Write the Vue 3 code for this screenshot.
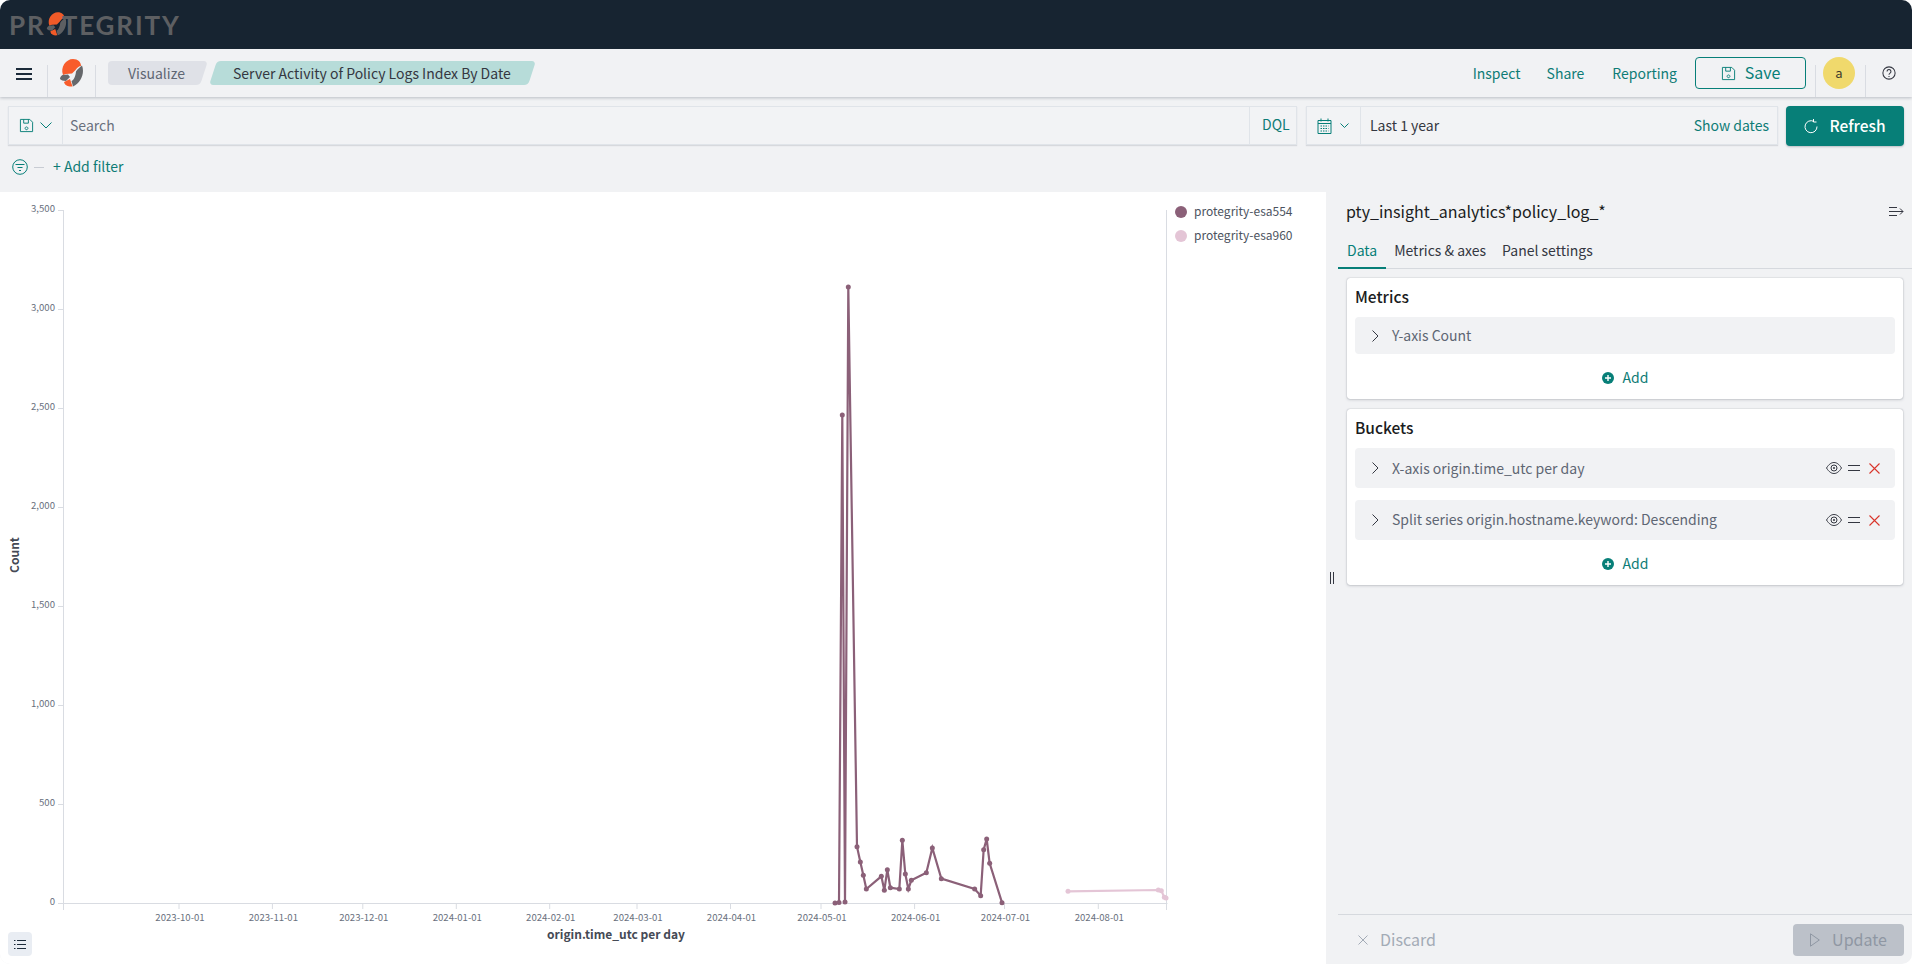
<script setup>
const H = 902, perUnit = 99 / 500
const yTicks = [0, 500, 1000, 1500, 2000, 2500, 3000, 3500].map(v => ({
  y: H - v * perUnit,
  label: v.toLocaleString('en-US')
}))
const xTicks = [
  [179, '2023-10-01'], [272.4, '2023-11-01'], [362.8, '2023-12-01'], [456.3, '2024-01-01'],
  [549.7, '2024-02-01'], [637, '2024-03-01'], [730.5, '2024-04-01'], [821, '2024-05-01'],
  [914.6, '2024-06-01'], [1004.5, '2024-07-01'], [1098.3, '2024-08-01']
].map(([x, label]) => ({ x, label }))
const zoomPts = [[231,197],[241,243],[250,283],[259,324],[304,286],[313,328],[322,266],[331,320],[358,324],[367,178],[376,279],[385,324],[394,298],[439,275],[457,201],[484,293],[584,324],[602,344],[611,206],[620,174],[629,247],[666,365]]
  .map(([x, y]) => [780 + x / 3, 780 + y / 3])
const s1 = [[835, 902], [839, 901.5], [842.3, 414], [845, 901], [848.3, 286], ...zoomPts]
const s2 = [[864,331],[1135,327],[1144,329],[1153,349],[1158,351]].map(([x, y]) => [780 + x / 3, 780 + y / 3])
const toPts = a => a.map(p => p.join(',')).join(' ')
const line1 = toPts(s1)
const line2 = toPts(s2)
</script>

<template>
  <div class="app">
    <header class="brand">
      <div class="wordmark">
        <span>PR</span>
        <svg class="wm-o" viewBox="0 0 25 28" width="21" height="24">
          <path d="M4 16 C1 8 7 0 14 0 C19 0 22 3 22 7 C20 7 18 9 16.500 11 L13 14.500 L7 15 Z" fill="#f05a28"/>
          <path d="M23 6.500 C26 14 22 24 14 27.500 L12.500 22 C15 21 16.500 17 17 12.500 C18.500 10 21 8 23 6.500 Z" fill="#5d5f62"/>
          <path d="M1 20 C1 18 2 17 3.500 16 L9 15.500 L11 18 L7 22 C4 22 2 21 1 20 Z" fill="#5d5f62"/>
          <path d="M5 23 L11 20 L13.500 27.500 C10 28 6 27 5 23 Z" fill="#f05a28"/>
        </svg>
        <span class="wm-rest">TEGRITY</span>
      </div>
    </header>

    <nav class="nav">
      <div class="nav-cell first">
        <svg width="16" height="12" viewBox="0 0 16 12"><path d="M0 1h16M0 6h16M0 11h16" stroke="#1c2b3a" stroke-width="2"/></svg>
      </div>
      <div class="nav-cell logo">
        <svg width="25" height="28" viewBox="0 0 25 28">
          <path d="M4 16 C1 8 7 0 14 0 C19 0 22 3 22 7 C20 7 18 9 16.500 11 L13 14.500 L7 15 Z" fill="#f85c2b"/>
          <path d="M23 6.500 C26 14 22 24 14 27.500 L12.500 22 C15 21 16.500 17 17 12.500 C18.500 10 21 8 23 6.500 Z" fill="#66686b"/>
          <path d="M1 20 C1 18 2 17 3.500 16 L9 15.500 L11 18 L7 22 C4 22 2 21 1 20 Z" fill="#66686b"/>
          <path d="M5 23 L11 20 L13.500 27.500 C10 28 6 27 5 23 Z" fill="#f85c2b"/>
        </svg>
      </div>
      <div class="crumbs">
        <span class="crumb crumb-a">Visualize</span>
        <span class="crumb crumb-b">Server Activity of Policy Logs Index By Date</span>
      </div>
      <div class="nav-right">
        <a class="navlink">Inspect</a>
        <a class="navlink">Share</a>
        <a class="navlink">Reporting</a>
        <button class="save">
          <svg width="15" height="15" viewBox="0 0 16 16" fill="none" stroke="#077f78"><path d="M1.500 1.500h10l3 3v10h-13z M5 1.500v4h5v-4 M8 9.500a1.500 1.500 0 1 0 .01 0"/></svg>
          <span class="lift">Save</span>
        </button>
        <div class="nav-sep avatar-cell"><span class="avatar">a</span></div>
        <div class="nav-sep help-cell">
          <svg width="14" height="14" viewBox="0 0 16 16" fill="none" stroke="#343741" stroke-width="1.200"><circle cx="8" cy="8" r="7"/><path d="M5.800 6.200a2.200 2.200 0 1 1 3.400 1.900c-.8.500-1.200 1-1.200 1.900"/><path d="M8 11.300v1.200"/></svg>
        </div>
      </div>
    </nav>

    <section class="query">
      <div class="qbox search">
        <div class="qprefix save-pre">
          <svg width="15" height="15" viewBox="0 0 16 16" fill="none" stroke="#077f78"><path d="M1.500 1.500h10l3 3v10h-13z M5 1.500v4h5v-4 M8 9.500a1.500 1.500 0 1 0 .01 0"/></svg>
          <svg width="12" height="7" viewBox="0 0 12 7" fill="none" stroke="#077f78"><path d="M.5.500 6 6l5.500-5.500"/></svg>
        </div>
        <span class="search-text lift">Search</span>
        <span class="dql">DQL</span>
      </div>
      <div class="qbox date">
        <div class="qprefix cal-pre">
          <svg width="15" height="16" viewBox="0 0 15 16" fill="none" stroke="#077f78"><path d="M1 2.500h13v13H1zM1 5.500h13M4 .5v3M11 .5v3"/><path d="M3.500 8h8M3.500 10.500h8M3.500 13h8" stroke-dasharray="1.500 1"/></svg>
          <svg width="9" height="5" viewBox="0 0 9 5" fill="none" stroke="#077f78"><path d="M.5.500 4.500 4.500l4-4"/></svg>
        </div>
        <span class="range lift">Last 1 year</span>
        <span class="show-dates lift">Show dates</span>
      </div>
      <button class="refresh">
        <svg width="14" height="15" viewBox="0 0 14 15" fill="none" stroke="#fff"><path d="M9.800 2.400A6 6 0 1 0 13 7.500"/><path d="M9.500 0v3h3"/></svg>
        <span class="lift">Refresh</span>
      </button>
    </section>

    <section class="filters">
      <svg width="16" height="16" viewBox="0 0 16 16" fill="none" stroke="#077f78"><circle cx="8" cy="8" r="7.300"/><path d="M3.500 5.500h9M5.500 8.500h5M7 11.500h2"/></svg>
      <span class="dash"></span>
      <a class="add-filter lift">+ Add filter</a>
    </section>

    <main class="main">
      <div class="chart">
        <svg class="plot" width="1326" height="773" viewBox="0 191 1326 773">
          <g stroke="#d9dce2" fill="none">
            <path d="M63.500 209V909M63 902.500H1167.500M1166.500 209V909"/>
            <path v-for="t in yTicks" :key="t.label" :d="`M58 ${t.y + .5}H63`"/>
            <path v-for="t in xTicks" :key="t.label" :d="`M${t.x} 902V908`"/>
          </g>
          <g class="tick">
            <text v-for="t in yTicks" :key="t.label" x="55" :y="t.y + 2" text-anchor="end">{{ t.label }}</text>
            <text v-for="t in xTicks" :key="t.label" :x="t.x + 1" y="920" text-anchor="middle">{{ t.label }}</text>
          </g>
          <text class="axis-title" x="616" y="938" text-anchor="middle">origin.time_utc per day</text>
          <text class="axis-title" transform="translate(19 554) rotate(-90)" text-anchor="middle">Count</text>
          <polyline :points="line2" fill="none" stroke="#e4c5d6" stroke-width="2.200"/>
          <circle v-for="(p, i) in s2" :key="i" :cx="p[0]" :cy="p[1]" r="2.500" fill="#e4c5d6"/>
          <polyline :points="line1" fill="none" stroke="#8b6078" stroke-width="2.200"/>
          <circle v-for="(p, i) in s1" :key="i" :cx="p[0]" :cy="p[1]" r="2.500" fill="#8b6078"/>
          <circle cx="1181" cy="211" r="6" fill="#8b6078"/>
          <circle cx="1181" cy="235" r="6" fill="#e4c5d6"/>
          <text class="legend" x="1194" y="215">protegrity-esa554</text>
          <text class="legend" x="1194" y="239">protegrity-esa960</text>
        </svg>
        <button class="legend-toggle">
          <svg width="12" height="11" viewBox="0 0 12 11" fill="none" stroke="#1c2b3a"><path d="M3 1.500h9M3 5.500h9M3 9.500h9M0 1.500h1.500M0 5.500h1.500M0 9.500h1.500"/></svg>
        </button>
      </div>

      <aside class="side">
        <div class="grip"><i></i><i></i></div>
        <div class="side-body">
          <div class="title-row">
            <h2>pty_insight_analytics*policy_log_*</h2>
            <svg width="15" height="11" viewBox="0 0 15 11" fill="none" stroke="#343741"><path d="M0 1.500h8M0 5.500h14M0 9.500h8M11 2.500l3 3-3 3"/></svg>
          </div>
          <div class="tabs">
            <span class="tab active">Data</span>
            <span class="tab">Metrics &amp; axes</span>
            <span class="tab">Panel settings</span>
          </div>
          <div class="cards">
            <section class="card metrics">
              <h3>Metrics</h3>
              <div class="row row-metric">
                <svg class="chev" width="7" height="12" viewBox="0 0 7 12" fill="none" stroke="#343741"><path d="M.5.500 6 6 .5 11.500"/></svg>
                <span class="lift">Y-axis Count</span>
              </div>
              <div class="add">
                <svg width="12" height="12" viewBox="0 0 12 12"><circle cx="6" cy="6" r="6" fill="#077f78"/><path d="M3 6h6M6 3v6" stroke="#fff" stroke-width="1.400"/></svg>
                <span class="lift">Add</span>
              </div>
            </section>
            <section class="card">
              <h3>Buckets</h3>
              <div class="row">
                <svg class="chev" width="7" height="12" viewBox="0 0 7 12" fill="none" stroke="#343741"><path d="M.5.500 6 6 .5 11.500"/></svg>
                <span>X-axis origin.time_utc per day</span>
                <div class="actions">
                  <svg width="16" height="12" viewBox="0 0 16 12" fill="none" stroke="#343741"><path d="M.5 6C3 2 5.500.5 8 .5S13 2 15.500 6C13 10 10.500 11.500 8 11.500S3 10 .5 6z"/><circle cx="8" cy="6" r="3"/><circle cx="8" cy="6" r="1" fill="#343741" stroke="none"/></svg>
                  <svg width="12" height="6" viewBox="0 0 12 6" fill="none" stroke="#343741"><path d="M0 .5h12M0 5.500h12"/></svg>
                  <svg width="11" height="11" viewBox="0 0 11 11" fill="none" stroke="#d9352b" stroke-width="1.100"><path d="M.5.500l10 10M10.500.5l-10 10"/></svg>
                </div>
              </div>
              <div class="row">
                <svg class="chev" width="7" height="12" viewBox="0 0 7 12" fill="none" stroke="#343741"><path d="M.5.500 6 6 .5 11.500"/></svg>
                <span class="lift">Split series origin.hostname.keyword: Descending</span>
                <div class="actions">
                  <svg width="16" height="12" viewBox="0 0 16 12" fill="none" stroke="#343741"><path d="M.5 6C3 2 5.500.5 8 .5S13 2 15.500 6C13 10 10.500 11.500 8 11.500S3 10 .5 6z"/><circle cx="8" cy="6" r="3"/><circle cx="8" cy="6" r="1" fill="#343741" stroke="none"/></svg>
                  <svg width="12" height="6" viewBox="0 0 12 6" fill="none" stroke="#343741"><path d="M0 .5h12M0 5.500h12"/></svg>
                  <svg width="11" height="11" viewBox="0 0 11 11" fill="none" stroke="#d9352b" stroke-width="1.100"><path d="M.5.500l10 10M10.500.5l-10 10"/></svg>
                </div>
              </div>
              <div class="add">
                <svg width="12" height="12" viewBox="0 0 12 12"><circle cx="6" cy="6" r="6" fill="#077f78"/><path d="M3 6h6M6 3v6" stroke="#fff" stroke-width="1.400"/></svg>
                <span class="lift">Add</span>
              </div>
            </section>
          </div>
          <footer class="foot">
            <span class="discard">
              <svg width="10" height="10" viewBox="0 0 10 10" fill="none" stroke="#a3abb6"><path d="M.5.500l9 9M9.500.5l-9 9"/></svg>
              <span class="lift">Discard</span>
            </span>
            <button class="update">
              <svg width="10" height="14" viewBox="0 0 10 14" fill="none" stroke="#8f97a3"><path d="M.5.800 9.300 7 .5 13.200z"/></svg>
              <span class="lift">Update</span>
            </button>
          </footer>
        </div>
      </aside>
    </main>
  </div>
</template>

<style>
html, body { margin: 0; background: #fff; }
</style>

<style scoped>
.app {
  width: 1912px; height: 964px; overflow: hidden; border-radius: 10px;
  display: flex; flex-direction: column; background: #f1f2f4; color: #343741;
  font-family: "Noto Sans CJK SC", "Noto Sans", sans-serif; font-size: 14px; line-height: 20px;
}
button { font: inherit; border: 0; padding: 0; }
svg { display: block; flex: none; }
h2, h3 { margin: 0; font-weight: 500; }
.lift { padding-bottom: 2px; }

.brand { height: 49px; flex: none; background: #172431; display: flex; align-items: center; padding-left: 9px; }
.wordmark { display: flex; align-items: center; font: 700 26px/30px Lato, sans-serif; color: #5d5f62; letter-spacing: 1.900px; }
.wm-o { margin: -1px -5px 0 0; }

.nav { height: 48px; flex: none; display: flex; align-items: center; position: relative; background: #f1f2f4; box-shadow: 0 1px 3px rgba(60,70,85,.3); z-index: 1; }
.nav-cell { width: 48px; height: 32px; align-self: flex-end; display: flex; justify-content: center; border-right: 1px solid #d9dce2; box-sizing: border-box; }
.nav-cell.first { padding-top: 3px; }
.nav-cell.logo svg { margin-top: -6px; }
.crumbs { display: flex; margin-left: 12px; gap: 9px; }
.crumb { position: relative; height: 24px; line-height: 24px; z-index: 0; }
.crumb::before { content: ""; position: absolute; inset: 0; z-index: -1; border-radius: 4px; transform: skewX(-18deg); }
.crumb-a { width: 96px; padding-left: 20px; box-sizing: border-box; color: #5e6673; }
.crumb-a::before { background: #dfe1e7; left: 20px; }
.crumb-a::after { content: ""; position: absolute; z-index: -1; left: 0; top: 0; bottom: 0; width: 40px; background: #dfe1e7; border-radius: 4px; }
.crumb-b { width: 319px; padding-left: 20px; box-sizing: border-box; color: #343741; white-space: nowrap; }
.crumb-b::before { background: #b7dcd9; }
.nav-right { margin-left: auto; display: flex; align-items: center; height: 100%; }
.navlink { color: #0e7c76; margin-right: 26px; }
.navlink:nth-child(2) { margin-right: 28px; }
.navlink:nth-child(3) { margin-right: 18px; }
.save { width: 111px; height: 32px; box-sizing: border-box; border: 1px solid #077f78; border-radius: 4px; background: #f1f2f4; color: #077f78; display: flex; align-items: center; justify-content: center; gap: 9px; font-size: 16px; }
.nav-sep { height: 32px; align-self: flex-end; border-left: 1px solid #d9dce2; box-sizing: border-box; }
.avatar-cell { width: 50px; margin-left: 9px; padding-left: 7px; }
.avatar { display: flex; align-items: center; justify-content: center; width: 32px; height: 32px; margin-top: -8px; border-radius: 50%; background: #f0d96c; font-size: 13px; color: #3c3a2c; }
.help-cell { width: 47px; padding-left: 16px; }
.help-cell svg { margin-top: 1px; }

.query { display: flex; padding: 9px 8px 0 8px; gap: 9px; align-items: flex-start; flex: none; }
.qbox { height: 39px; box-sizing: border-box; border: 1px solid #e0e4e9; box-shadow: 0 1px 1px rgba(60,70,85,.14); display: flex; align-items: center; background: #f2f3f5; }
.search { width: 1289px; }
.date { width: 472px; }
.qprefix { height: 100%; display: flex; align-items: center; border-right: 1px solid #e0e4e9; box-sizing: border-box; flex: none; }
.save-pre { width: 54px; padding-left: 10px; gap: 6px; }
.cal-pre { width: 54px; padding-left: 10px; gap: 8px; }
.search-text { margin-left: 7px; color: #69707d; }
.dql { margin-left: auto; width: 47px; height: 100%; line-height: 35px; box-sizing: border-box; padding-left: 12px; border-left: 1px solid #e0e4e9; color: #0e7c76; }
.range { margin-left: 9px; color: #343741; }
.show-dates { margin-left: auto; margin-right: 8px; color: #0e7c76; }
.refresh { width: 118px; height: 40px; margin-left: -1px; background: #077f78; border-radius: 4px; color: #fff; font-weight: 500; font-size: 15.500px; display: flex; align-items: center; justify-content: center; gap: 11px; box-shadow: 0 1px 2px rgba(60,70,85,.3); }

.filters { height: 46px; flex: none; box-sizing: border-box; display: flex; align-items: center; padding: 0 0 4px 12px; }
.dash { width: 10px; height: 1px; background: #c8ccd3; margin: 0 9px 0 6px; }
.add-filter { color: #0e7c76; }

.main { flex: 1; display: flex; min-height: 0; }
.chart { width: 1326px; flex: none; background: #fff; position: relative; }
.tick text { font-size: 9.600px; fill: #69707d; }
.axis-title { font-size: 12px; font-weight: 700; fill: #454a55; }
.legend { font-size: 12px; fill: #4c5360; }
.legend-toggle { position: absolute; left: 8px; bottom: 8px; width: 24px; height: 24px; border-radius: 4px; background: #e9edf3; display: flex; align-items: center; justify-content: center; }

.side { flex: 1; display: flex; min-width: 0; }
.grip { width: 12px; flex: none; display: flex; align-items: center; gap: 2px; padding-left: 4px; box-sizing: border-box; }
.grip i { width: 1px; height: 12px; background: #343741; }
.side-body { flex: 1; display: flex; flex-direction: column; min-width: 0; }
.title-row { height: 41px; display: flex; align-items: center; justify-content: space-between; padding: 0 8px 3px 8px; box-sizing: border-box; }
.title-row h2 { font-size: 16px; color: #1a1c21; font-weight: 400; }
.tabs { height: 36px; display: flex; border-bottom: 1px solid #d6d9de; box-sizing: border-box; }
.tab { padding: 7px 8px 0; box-sizing: border-box; }
.tab.active { color: #077f78; height: 36px; padding: 7px 9px 0; border-bottom: 2px solid #077f78; }
.cards { margin: 9px 9px 0; display: flex; flex-direction: column; gap: 10px; }
.card { background: #fff; border-radius: 3px; box-shadow: 0 0 1px rgba(50,60,75,.5), 0 1px 3px rgba(50,60,75,.2); padding: 6px 8px 0; box-sizing: border-box; height: 176px; display: flex; flex-direction: column; }
.card.metrics { height: 121px; }
.card h3 { font-size: 15.500px; line-height: 24px; color: #1a1c21; margin-bottom: 9px; }
.row { height: 40px; background: #f1f2f4; border-radius: 4px; display: flex; align-items: center; padding-left: 17px; color: #5e6673; margin-bottom: 12px; }
.row-metric { height: 37px; margin-bottom: 0; }
.chev { margin-right: 13px; }
.actions { margin-left: auto; margin-right: 15px; display: flex; align-items: center; gap: 6px; }
.actions svg:last-child { margin-left: 3px; }
.add { display: flex; align-items: center; justify-content: center; gap: 9px; color: #0e7c76; height: 20px; margin-top: 14px; }
.card:not(.metrics) .add { margin-top: 2px; }
.foot { margin-top: auto; margin-bottom: 8px; height: 41px; border-top: 1px solid #d6d9de; display: flex; align-items: flex-end; justify-content: space-between; padding: 0 8px 0 20px; flex: none; }
.discard { display: flex; align-items: center; gap: 12px; color: #a3abb6; height: 32px; font-size: 16px; }
.update { width: 111px; height: 32px; background: #bcc1c9; border-radius: 4px; color: #8f97a3; display: flex; align-items: center; justify-content: center; gap: 12px; font-size: 16px; }
</style>
